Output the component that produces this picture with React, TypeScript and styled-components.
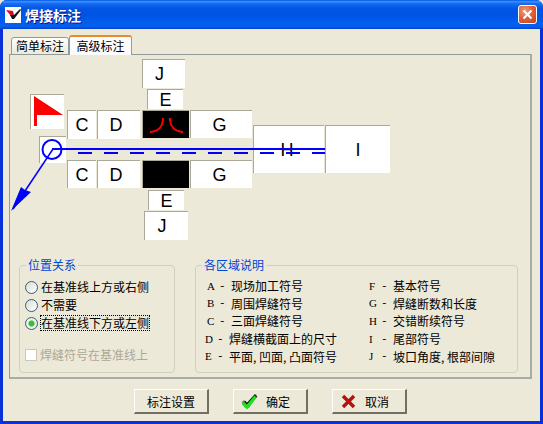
import React from "react";
import styled, { createGlobalStyle } from "styled-components";

const CJK = `"Noto Sans CJK SC", "Liberation Sans", sans-serif`;

const GlobalStyle = createGlobalStyle`
  html, body { margin: 0; padding: 0; background: #ece9d8; }
  body { font-family: ${CJK}; font-size: 12px; color: #000; }
`;

const Window = styled.div`
  width: 543px;
  height: 424px;
  box-sizing: border-box;
  display: flex;
  flex-direction: column;
  background: #0831d9;
  border-radius: 7px 7px 0 0;
  overflow: hidden;
`;

const TitleBar = styled.div`
  height: 29px;
  flex: none;
  display: flex;
  align-items: center;
  padding: 1px 6px 0 5px;
  box-sizing: border-box;
  background: linear-gradient(180deg, #0058e6 0%, #3a93ff 6%, #1a6cf0 12%, #0055e5 30%, #0054e3 55%, #0160f0 82%, #0a5ce8 92%, #0042c8 100%);
`;

const AppIcon = styled.svg`
  width: 16px;
  height: 16px;
  flex: none;
`;

const Title = styled.div`
  margin-left: 4px;
  flex: 1;
  color: #fff;
  font-size: 14px;
  font-weight: 700;
  line-height: 16px;
  text-shadow: 1px 1px 0 #0f1089;
`;

const CloseButton = styled.div`
  width: 19px;
  height: 19px;
  margin-top: -1px;
  box-sizing: border-box;
  border: 1px solid #fff;
  border-radius: 3px;
  background: radial-gradient(circle at 35% 30%, #f0a080 0%, #e2623c 45%, #c0401c 100%);
  display: flex;
  align-items: center;
  justify-content: center;
`;

const Body = styled.div`
  flex: 1;
  margin: 0 3px 3px 3px;
  background: #ece9d8;
  display: flex;
  flex-direction: column;
  padding: 6px 9px 0 6px;
  min-height: 0;
`;

const TabStrip = styled.div`
  height: 20px;
  display: flex;
  align-items: flex-end;
  padding-left: 2px;
  margin-bottom: -1px;
  position: relative;
  z-index: 1;
`;

const Tab = styled.div<{ $active?: boolean }>`
  box-sizing: border-box;
  height: ${p => (p.$active ? "20px" : "18px")};
  width: ${p => (p.$active ? "63px" : "58px")};
  border: 1px solid #919b9c;
  border-bottom: ${p => (p.$active ? "none" : "1px solid #919b9c")};
  border-top: ${p => (p.$active ? "2px solid #e68b2c" : "1px solid #919b9c")};
  border-radius: 3px 3px 0 0;
  background: ${p => (p.$active ? "#fcfcfe" : "linear-gradient(180deg, #fff, #ece9d8)")};
  text-align: center;
  font-size: 12px;
  line-height: ${p => (p.$active ? "17px" : "16px")};
  white-space: nowrap;
`;

const Panel = styled.div`
  box-sizing: border-box;
  width: 523px;
  height: 325px;
  border: 1px solid #919b9c;
  border-right: 2px solid #a6aca6;
  border-bottom: 2px solid #a6aca6;
  display: flex;
  flex-direction: column;
`;

const Canvas = styled.div`
  position: relative;
  height: 202px;
  flex: none;
`;

const Cell = styled.div<{ $x: number; $y: number; $w: number; $h: number; $dark?: boolean; $nudge?: number }>`
  position: absolute;
  left: ${p => p.$x}px;
  top: ${p => p.$y}px;
  width: ${p => p.$w}px;
  height: ${p => p.$h}px;
  box-sizing: border-box;
  padding-right: ${p => p.$nudge ?? 0}px;
  background: ${p => (p.$dark ? "#000" : "#fff")};
  border-top: 1px solid #aca899;
  border-left: 1px solid #aca899;
  display: flex;
  align-items: center;
  justify-content: center;
  font-family: "Liberation Sans", sans-serif;
  font-size: 18px;
  line-height: 1;
`;

const Overlay = styled.svg`
  position: absolute;
  left: 0;
  top: 0;
  overflow: visible;
`;

const Groups = styled.div`
  display: flex;
  gap: 20px;
  padding: 1px 12px 0 9px;
`;

const Group = styled.fieldset<{ $w: number }>`
  box-sizing: border-box;
  width: ${p => p.$w}px;
  height: 115px;
  margin: 0;
  padding: 0 5px;
  border: 1px solid #d0d0bf;
  border-radius: 4px;
`;

const GroupTitle = styled.legend`
  padding: 0 2px;
  margin-left: 1px;
  color: #0046d5;
  font-size: 12px;
  line-height: 14px;
`;

const Options = styled.div`
  padding-top: 6px;
`;

const Option = styled.div`
  display: flex;
  align-items: center;
  height: 18px;
  gap: 3px;
`;

const RadioDot = styled.span<{ $on?: boolean }>`
  width: 13px;
  height: 13px;
  box-sizing: border-box;
  flex: none;
  border-radius: 50%;
  border: 1px solid #3c5a78;
  background: ${p =>
    p.$on
      ? "radial-gradient(circle, #35c03a 0 2.5px, #e8efe0 3.5px, #f4f4ee 100%)"
      : "linear-gradient(135deg, #dcdcd2, #fff)"};
`;

const OptionText = styled.span<{ $focus?: boolean; $off?: boolean }>`
  font-size: 12px;
  line-height: 14px;
  white-space: nowrap;
  color: ${p => (p.$off ? "#aca899" : "#000")};
  outline: ${p => (p.$focus ? "1px dotted #000" : "none")};
`;

const CheckBox = styled.span`
  width: 12px;
  height: 12px;
  box-sizing: border-box;
  flex: none;
  background: #fff;
  border: 1px solid #cac8bb;
`;

const OptionGap = styled.div`
  height: 14px;
`;

const Legend = styled.div`
  display: grid;
  grid-template-columns: 164px 1fr;
  grid-auto-flow: column;
  grid-template-rows: repeat(5, 17.6px);
  padding: 5px 0 0 4px;
`;

const LegendRow = styled.div<{ $shift?: number }>`
  display: flex;
  align-items: center;
  font-size: 12px;
  white-space: nowrap;
  padding-left: ${p => p.$shift ?? 0}px;
`;

const Code = styled.span`
  width: 12px;
  font-family: "Liberation Serif", serif;
  font-size: 11px;
`;

const Dash = styled.span`
  width: 12px;
  font-family: "Liberation Mono", monospace;
  font-size: 11px;
`;

const Buttons = styled.div`
  display: flex;
  justify-content: flex-start;
  gap: 24px;
  padding: 10px 0 0 125px;
`;

const Button = styled.div<{ $icon?: boolean }>`
  box-sizing: border-box;
  width: 75px;
  height: 25px;
  display: flex;
  align-items: center;
  justify-content: ${p => (p.$icon ? "flex-start" : "center")};
  padding-left: ${p => (p.$icon ? "7px" : "0")};
  gap: 7px;
  background: #ece9d8;
  border-top: 1px solid #fff;
  border-left: 1px solid #fff;
  border-right: 2px solid #716f64;
  border-bottom: 2px solid #716f64;
  font-size: 12px;
`;

const ButtonIcon = styled.svg`
  width: 18px;
  height: 18px;
  flex: none;
`;

const legendRows = [
  { code: "A", name: "现场加工符号", shift: 2 },
  { code: "B", name: "周围焊缝符号", shift: 2 },
  { code: "C", name: "三面焊缝符号", shift: 2 },
  { code: "D", name: "焊缝横截面上的尺寸", shift: 0 },
  { code: "E", name: "平面, 凹面, 凸面符号", shift: 0 },
  { code: "F", name: "基本符号", shift: 0 },
  { code: "G", name: "焊缝断数和长度", shift: 0 },
  { code: "H", name: "交错断续符号", shift: 0 },
  { code: "I", name: "尾部符号", shift: 0 },
  { code: "J", name: "坡口角度, 根部间隙", shift: 0 },
];

// cell coordinates are relative to the tab panel's inner corner
const ox = 10;
const oy = 55;
const cells = [
  { t: "J", x: 142, y: 59, w: 43, h: 29, n: 9 },
  { t: "E", x: 147, y: 89, w: 36, h: 20, n: 0 },
  { t: "C", x: 67, y: 110, w: 29, h: 29, n: 0 },
  { t: "D", x: 97, y: 110, w: 43, h: 29, n: 6 },
  { t: "G", x: 190, y: 110, w: 62, h: 28, n: 4 },
  { t: "H", x: 253, y: 125, w: 71, h: 48, n: 4 },
  { t: "I", x: 325, y: 125, w: 65, h: 48, n: 0 },
  { t: "", x: 39, y: 136, w: 27, h: 27, n: 0 },
  { t: "C", x: 67, y: 160, w: 29, h: 28, n: 0 },
  { t: "D", x: 97, y: 160, w: 43, h: 28, n: 6 },
  { t: "G", x: 190, y: 160, w: 62, h: 28, n: 4 },
  { t: "E", x: 148, y: 190, w: 36, h: 20, n: 0 },
  { t: "J", x: 144, y: 211, w: 44, h: 29, n: 9 },
];

export default function App() {
  return (
    <Window>
      <GlobalStyle />
      <TitleBar>
        <AppIcon viewBox="0 0 16 16">
          <rect width="16" height="16" fill="#fff" />
          <path d="M1 3 L8 4 L9 8 L6 9 Z" fill="#d01020" />
          <path d="M5 8 L9 8 L15 2 L16 3 L9 12 L7 12 Z" fill="#111" />
        </AppIcon>
        <Title>焊接标注</Title>
        <CloseButton>
          <svg width="11" height="11" viewBox="0 0 11 11">
            <path d="M1.5 1.5 L9.5 9.5 M9.5 1.5 L1.5 9.5" stroke="#fff" strokeWidth="2" />
          </svg>
        </CloseButton>
      </TitleBar>
      <Body>
        <TabStrip>
          <Tab>简单标注</Tab>
          <Tab $active>高级标注</Tab>
        </TabStrip>
        <Panel>
          <Canvas>
            {cells.map((c, i) => (
              <Cell key={i} $x={c.x - ox} $y={c.y - oy} $w={c.w} $h={c.h} $nudge={c.n}>
                {c.t}
              </Cell>
            ))}
            <Cell $x={30 - ox} $y={94 - oy} $w={34} $h={35}>
              <svg width="33" height="34" viewBox="0 0 33 34">
                <path d="M3 1 L32 20 L6 20 L6 31 L3 31 Z" fill="#ff0000" />
              </svg>
            </Cell>
            <Cell $x={142 - ox} $y={110 - oy} $w={47} $h={28} $dark>
              <svg width="46" height="27" viewBox="0 0 46 27">
                <path d="M20 7 C20 15 17 20 7 21 M27 7 C27 15 30 20 40 21" fill="none" stroke="#ff0000" strokeWidth="2" />
              </svg>
            </Cell>
            <Cell $x={142 - ox} $y={160 - oy} $w={47} $h={28} $dark />
            <Overlay width="523" height="202" viewBox={`${ox} ${oy} 523 202`}>
              <g fill="none" stroke="#0000ff">
                <circle cx="52" cy="149.5" r="9.5" strokeWidth="2" />
                <path d="M52 149 H325" strokeWidth="2" />
                <path d="M78 153 H325" strokeWidth="2" strokeDasharray="14 12" />
                <path d="M53 149 L13 209" strokeWidth="1.5" />
              </g>
              <path d="M11 211 L21 187 L25 190 L31 192 Z" fill="#0000ff" />
            </Overlay>
          </Canvas>
          <Groups>
            <Group $w={156}>
              <GroupTitle>位置关系</GroupTitle>
              <Options>
                <Option>
                  <RadioDot />
                  <OptionText>在基准线上方或右侧</OptionText>
                </Option>
                <Option>
                  <RadioDot />
                  <OptionText>不需要</OptionText>
                </Option>
                <Option>
                  <RadioDot $on />
                  <OptionText $focus>在基准线下方或左侧</OptionText>
                </Option>
                <OptionGap />
                <Option>
                  <CheckBox />
                  <OptionText $off>焊缝符号在基准线上</OptionText>
                </Option>
              </Options>
            </Group>
            <Group $w={323}>
              <GroupTitle>各区域说明</GroupTitle>
              <Legend>
                {legendRows.map(r => (
                  <LegendRow key={r.code} $shift={r.shift}>
                    <Code>{r.code}</Code>
                    <Dash>-</Dash>
                    {r.name}
                  </LegendRow>
                ))}
              </Legend>
            </Group>
          </Groups>
        </Panel>
        <Buttons>
          <Button>标注设置</Button>
          <Button $icon>
            <ButtonIcon viewBox="0 0 18 18">
              <path d="M0.5 10 L3 8 L6 11 L14 2 L16 3 L8 16 L4 16 Z" fill="#8a8a7c" />
              <path d="M3 10 L6 13.5 L15 3.5" fill="none" stroke="#111" strokeWidth="3.5" />
              <path d="M2 11 L6 15 L14.5 4.5" fill="none" stroke="#1fe01f" strokeWidth="3.2" />
            </ButtonIcon>
            确定
          </Button>
          <Button $icon>
            <ButtonIcon viewBox="0 0 18 18">
              <path d="M3 4 L14 15 M14 4 L3 15" stroke="#b81010" strokeWidth="3.4" />
            </ButtonIcon>
            取消
          </Button>
        </Buttons>
      </Body>
    </Window>
  );
}
